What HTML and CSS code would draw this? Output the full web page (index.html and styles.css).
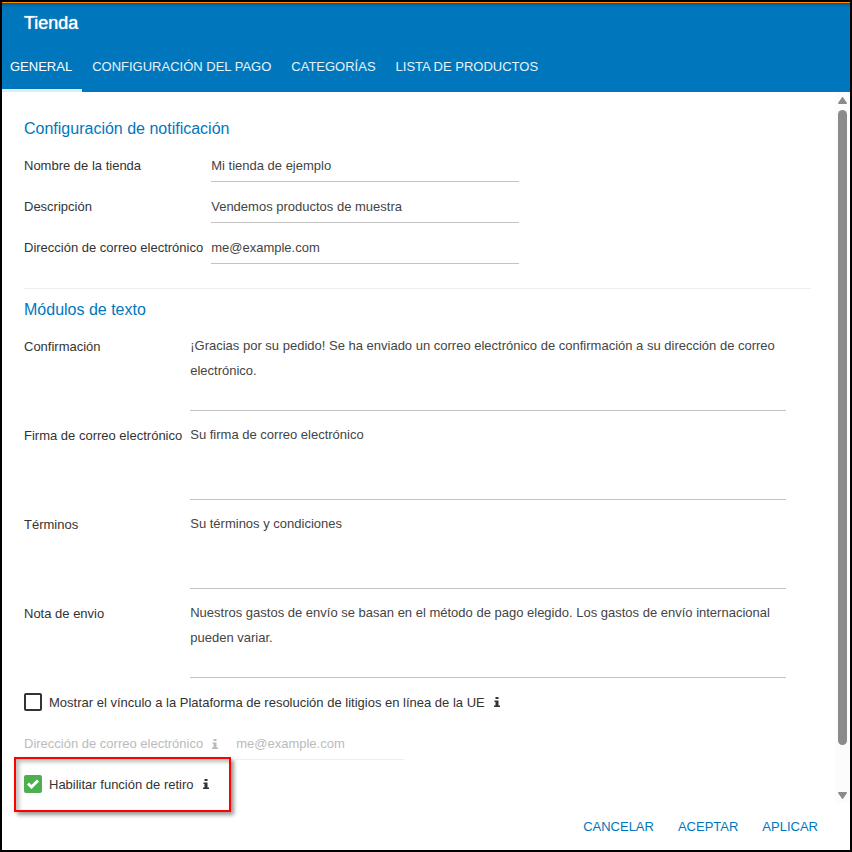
FILE: index.html
```html
<!DOCTYPE html>
<html lang="es">
<head>
<meta charset="utf-8">
<title>Tienda</title>
<link rel="stylesheet" href="styles.css">
</head>
<body>
<svg class="sprite" aria-hidden="true">
  <symbol id="info" viewBox="0 0 6 10"><path d="M1.500 0h3v2h-3zM.5 3.500h4V8.500H6V10H0V8.500h1.500V5H.5z"/></symbol>
</svg>
<div class="dialog">
  <header class="header">
    <h1 class="title">Tienda</h1>
    <nav class="tabs">
      <a class="tab active" href="#general">GENERAL</a>
      <a class="tab" href="#pago">CONFIGURACIÓN DEL PAGO</a>
      <a class="tab" href="#categorias">CATEGORÍAS</a>
      <a class="tab" href="#productos">LISTA DE PRODUCTOS</a>
    </nav>
  </header>
  <div class="body">
    <main class="content" id="general">
      <section class="section notify">
        <h2>Configuración de notificación</h2>
        <div class="fields">
          <label for="name">Nombre de la tienda</label>
          <input class="text" id="name" type="text" value="Mi tienda de ejemplo">
          <label for="desc">Descripción</label>
          <input class="text" id="desc" type="text" value="Vendemos productos de muestra">
          <label for="mail">Dirección de correo electrónico</label>
          <input class="text" id="mail" type="email" value="me@example.com">
        </div>
      </section>
      <section class="section modules">
        <h2>Módulos de texto</h2>
        <div class="areas">
          <label for="confirm">Confirmación</label>
          <textarea id="confirm">¡Gracias por su pedido! Se ha enviado un correo electrónico de confirmación a su dirección de correo electrónico.</textarea>
          <label for="sign">Firma de correo electrónico</label>
          <textarea id="sign">Su firma de correo electrónico</textarea>
          <label for="terms">Términos</label>
          <textarea id="terms">Su términos y condiciones</textarea>
          <label for="ship">Nota de envio</label>
          <textarea id="ship">Nuestros gastos de envío se basan en el método de pago elegido. Los gastos de envío internacional pueden variar.</textarea>
        </div>
      </section>
      <div class="check-row">
        <input type="checkbox" id="eu">
        <label for="eu">Mostrar el vínculo a la Plataforma de resolución de litigios en línea de la UE</label>
        <svg class="info"><use href="#info"/></svg>
      </div>
      <div class="mail-row">
        <label for="eumail">Dirección de correo electrónico</label>
        <svg class="info"><use href="#info"/></svg>
        <input class="text" id="eumail" type="email" value="me@example.com" disabled>
      </div>
      <div class="check-row marked">
        <span class="tick-box">
          <input type="checkbox" id="retiro" checked>
          <svg class="tick" viewBox="0 0 12 10"><path d="M1 4.500 4.500 8 11 1.500"/></svg>
        </span>
        <label for="retiro">Habilitar función de retiro</label>
        <svg class="info"><use href="#info"/></svg>
      </div>
    </main>
    <div class="scrollbar" aria-hidden="true">
      <svg class="arrow" viewBox="0 0 9 7"><path d="M4.500 0Q5 0 5.500 1L9 6Q9 7 8 7H1Q0 7 0 6L3.500 1Q4 0 4.500 0z"/></svg>
      <div class="track"><div class="thumb"></div></div>
      <svg class="arrow" viewBox="0 0 9 7"><path d="M4.500 7Q5 7 5.500 6L9 1Q9 0 8 0H1Q0 0 0 1L3.500 6Q4 7 4.500 7z"/></svg>
    </div>
  </div>
  <footer class="footer">
    <button type="button">CANCELAR</button>
    <button type="button">ACEPTAR</button>
    <button type="button">APLICAR</button>
  </footer>
</div>
</body>
</html>
```
FILE: styles.css
```css
*,
*::before { box-sizing: border-box; }

body {
  margin: 0;
  background: #000;
  color: #333;
  font: 13px/24px "Liberation Sans", Arial, sans-serif;
}

.sprite { position: absolute; width: 0; height: 0; }

.dialog {
  display: flex;
  flex-direction: column;
  min-height: 100vh;
  border: 2px solid #000;
  background: #fff;
}

.header {
  border-top: 1px solid #ff8400;
  background: linear-gradient(#07588a, #0077bd 4px);
  color: #fff;
}

.title {
  margin: 0;
  padding: 8px 22px 0;
  font-size: 18px;
  font-weight: 500;
  line-height: 24px;
  text-shadow: 0 0 1px #fff;
}

.tabs { display: flex; padding-top: 6px; }

.tab {
  padding: 14px 10px 10px;
  border-bottom: 3px solid transparent;
  color: #e6f2f9;
  text-decoration: none;
}

.tab.active {
  padding-left: 8px;
  border-color: #dcedf7;
  color: #fff;
}

.body { display: flex; flex: 1; }

.content { flex: 1; padding: 26px 24px 0 22px; }

h2 {
  margin: 0;
  color: #0077bd;
  font-size: 16px;
  font-weight: 400;
  line-height: 22px;
}

.notify {
  padding-bottom: 24px;
  border-bottom: 1px solid #eee;
}

.notify h2 { margin-bottom: 10px; }

.fields,
.areas {
  display: grid;
  grid-template-columns: max-content 1fr;
  column-gap: 8px;
}

.fields { row-gap: 9px; align-items: center; }

.text,
textarea {
  display: block;
  margin: 0;
  padding: 0;
  border: 0;
  border-bottom: 1px solid #c4c4c4;
  border-radius: 0;
  outline: 0;
  background: transparent;
  color: #444;
  font: inherit;
}

.text { width: 100%; max-width: 308px; height: 32px; }

.modules { padding-top: 10px; }

.modules h2 { margin-bottom: 12px; }

.areas { row-gap: 11px; line-height: 25px; }

.areas label { line-height: 27px; }

textarea {
  width: 100%;
  max-width: 596px;
  height: 78px;
  resize: none;
  overflow: hidden;
}

.check-row {
  display: flex;
  align-items: center;
  margin-top: 12px;
}

input[type="checkbox"] {
  appearance: none;
  display: block;
  flex: none;
  width: 18px;
  height: 18px;
  margin: 0;
  border: 2px solid #333;
  border-radius: 2px;
}

input[type="checkbox"]:checked { border-color: #4caf50; background: #4caf50; }

.check-row label {
  margin-left: 7px;
  padding-top: 2px;
  line-height: 22px;
}

.info {
  flex: none;
  width: 6px;
  height: 10px;
  margin-left: 9px;
  fill: #333;
}

.mail-row {
  display: flex;
  align-items: center;
  margin-top: 14px;
  color: #bbb;
}

.mail-row .info { fill: #bbb; }

.mail-row .text {
  max-width: 168px;
  margin-left: 18px;
  border-color: #eee;
  color: #bbb;
}

.tick-box { position: relative; }

.tick {
  position: absolute;
  inset: 4px 3px;
  width: 12px;
  height: 10px;
  fill: none;
  stroke: #fff;
  stroke-width: 3;
  pointer-events: none;
}

.marked { position: relative; }

/* Callout frame around the withdrawal option */
.marked::before {
  content: "";
  position: absolute;
  top: -15px;
  left: -10px;
  width: 217px;
  height: 55px;
  border: 2px solid #f00;
  box-shadow: 3px 3px 4px #0006, inset 3px 3px 4px #0004;
  pointer-events: none;
}

.scrollbar {
  display: flex;
  flex-direction: column;
  align-items: center;
  width: 15px;
  padding: 5px 0 4px;
  background: #fcfcfc;
}

.arrow { flex: none; width: 9px; height: 7px; fill: #8b8b8b; }

.track { flex: 1; width: 9px; padding: 6px 0; }

.thumb { height: 94%; border-radius: 5px; background: #8b8b8b; }

.footer {
  display: flex;
  justify-content: flex-end;
  gap: 24px;
  padding: 12px 32px 11px;
}

button {
  padding: 0;
  border: 0;
  background: none;
  color: #0077bd;
  font: inherit;
}
```
